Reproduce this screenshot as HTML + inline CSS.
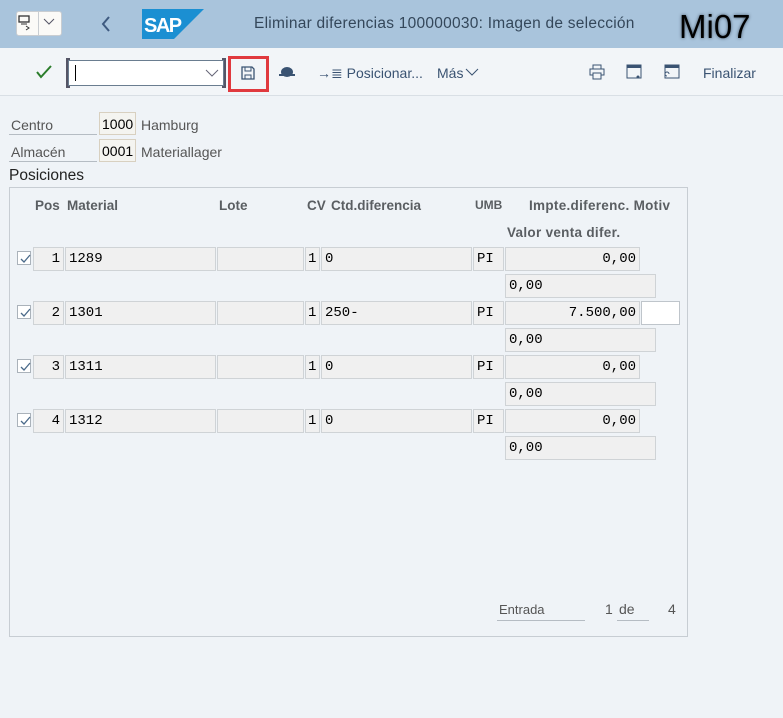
<!DOCTYPE html>
<html><head><meta charset="utf-8"><style>
*{margin:0;padding:0;box-sizing:border-box}
body{width:783px;height:718px;background:#eff3f7;font-family:"Liberation Sans",sans-serif;position:relative;overflow:hidden;color:#32363a}
.a{position:absolute}
.hdr{left:0;top:0;width:783px;height:48px;background:#a9c4dc}
.tb{left:0;top:48px;width:783px;height:48px;background:#f2f5f8;border-bottom:1px solid #d9dfe5}
.t{font-size:14px;white-space:nowrap}
.f{position:absolute;height:24px;background:#f0f0f0;border:1px solid #cfd3d6;font-family:"Liberation Mono",monospace;font-size:14px;line-height:22px;padding:0 3px;color:#000}
.r{text-align:right}
.h{position:absolute;font-size:13.5px;font-weight:bold;color:#5a5e62;top:198px}
.cb{position:absolute;width:14px;height:14px;border:1px solid #aab2ba;background:#fff}
.cb svg{position:absolute;left:1px;top:1px}
</style></head><body>
<div class="a hdr"></div>
<div class="a" style="left:16px;top:11px;width:46px;height:25px;background:#fbfaf7;border:1px solid #c9cdd1;border-radius:3px"></div>
<div class="a" style="left:38px;top:12px;width:1px;height:23px;background:#c9cdd1"></div>
<svg class="a" style="left:17px;top:14px" width="20" height="18"><rect x="2" y="2" width="10" height="6" fill="none" stroke="#333" stroke-width="1.3"/><path d="M4 10h6M9 12l3 2-3 2" stroke="#333" fill="none"/></svg>
<svg class="a" style="left:43px;top:18px" width="12" height="8"><path d="M1 1l5 5 5-5" stroke="#556" fill="none"/></svg>
<svg class="a" style="left:100px;top:15px" width="12" height="18"><path d="M9 2L3 9l6 7" stroke="#3e5a80" stroke-width="2" fill="none"/></svg>
<svg class="a" style="left:142px;top:9px" width="62" height="30"><path d="M0 0h62L32 30H0z" fill="#1b8fd2"/><text x="2" y="23" font-family="Liberation Sans" font-weight="bold" font-size="20" fill="#fff" letter-spacing="-1.5">SAP</text></svg>
<div class="a t" style="left:254px;top:15px;font-size:15.5px;color:#34475a;letter-spacing:0.25px">Eliminar diferencias 100000030: Imagen de selección</div>
<div class="a" style="left:679px;top:8px;font-size:33px;color:#000;text-shadow:0 0 3px #456">Mi07</div>

<div class="a tb"></div>
<svg class="a" style="left:36px;top:65px" width="16" height="14"><path d="M1 7l4 5 10-11" stroke="#2b7d2b" stroke-width="2" fill="none"/></svg>
<div class="a" style="left:68px;top:60px;width:156px;height:26px;background:#fff;border:1px solid #6a7d90"></div>
<div class="a" style="left:66px;top:58px;width:4px;height:30px;border:2px solid #556;border-right:none"></div>
<div class="a" style="left:222px;top:58px;width:4px;height:30px;border:2px solid #556;border-left:none"></div>
<div class="a" style="left:75px;top:65px;width:1px;height:16px;background:#000"></div>
<svg class="a" style="left:205px;top:69px" width="14" height="8"><path d="M1 1l6 6 6-6" stroke="#667" fill="none"/></svg>
<div class="a" style="left:228px;top:56px;width:41px;height:36px;border:3px solid #e0393e"></div>
<svg class="a" style="left:241px;top:66px" width="14" height="14"><path d="M1 1h10l2 2v10H1z" fill="none" stroke="#3a5372" stroke-width="1.3"/><path d="M4 1v4h6V1M4 13V9h6v4" fill="none" stroke="#3a5372"/></svg>
<svg class="a" style="left:278px;top:66px" width="18" height="12"><ellipse cx="9" cy="6" rx="6" ry="5" fill="#3a5372"/><rect x="1" y="8" width="16" height="2" fill="#3a5372"/></svg>
<div class="a t" style="left:317px;top:65px;color:#3a5372">→≣ Posicionar...</div>
<div class="a t" style="left:437px;top:65px;color:#3a5372">Más</div>
<svg class="a" style="left:465px;top:68px" width="14" height="9"><path d="M1 1l6 6 6-6" stroke="#3a5372" fill="none"/></svg>
<svg class="a" style="left:589px;top:64px" width="16" height="16"><rect x="4" y="1" width="8" height="4" fill="none" stroke="#3a5372"/><rect x="1" y="5" width="14" height="6" fill="none" stroke="#3a5372"/><rect x="4" y="9" width="8" height="6" fill="#f2f5f8" stroke="#3a5372"/></svg>
<svg class="a" style="left:626px;top:64px" width="16" height="16"><rect x="1" y="1" width="14" height="13" fill="none" stroke="#3a5372"/><rect x="1" y="1" width="14" height="3" fill="#3a5372"/><circle cx="12" cy="13" r="1.5" fill="#3a5372"/></svg>
<svg class="a" style="left:664px;top:64px" width="16" height="16"><rect x="1" y="1" width="14" height="13" fill="none" stroke="#3a5372"/><rect x="1" y="1" width="14" height="3" fill="#3a5372"/><path d="M3 12a2 2 0 1 1 2-2" stroke="#3a5372" fill="none"/></svg>
<div class="a t" style="left:703px;top:65px;color:#3a5372">Finalizar</div>

<div class="a t" style="left:11px;top:117px;color:#555">Centro</div>
<div class="a" style="left:9px;top:134px;width:88px;height:1px;background:#b5bcc3"></div>
<div class="a t" style="left:99px;top:112px;width:37px;height:23px;border:1px solid #d8d0c0;background:#f4f4f0;padding:3px 2px;color:#000">1000</div>
<div class="a t" style="left:141px;top:117px;color:#555">Hamburg</div>
<div class="a t" style="left:11px;top:144px;color:#555">Almacén</div>
<div class="a" style="left:9px;top:161px;width:88px;height:1px;background:#b5bcc3"></div>
<div class="a t" style="left:99px;top:139px;width:37px;height:23px;border:1px solid #d8d0c0;background:#f4f4f0;padding:3px 2px;color:#000">0001</div>
<div class="a t" style="left:141px;top:144px;color:#555">Materiallager</div>
<div class="a" style="left:9px;top:167px;font-size:15.5px;color:#222">Posiciones</div>

<div class="a" style="left:9px;top:187px;width:679px;height:450px;border:1px solid #c7cdd3"></div>
<div class="h" style="left:35px">Pos</div>
<div class="h" style="left:67px">Material</div>
<div class="h" style="left:219px">Lote</div>
<div class="h" style="left:307px">CV</div>
<div class="h" style="left:331px">Ctd.diferencia</div>
<div class="h" style="left:475px;font-size:12px">UMB</div>
<div class="h" style="left:529px;letter-spacing:0.3px">Impte.diferenc. Motiv</div>
<div class="h" style="left:507px;top:225px;letter-spacing:0.3px">Valor venta difer.</div>

<div class="cb" style="left:17px;top:251px"><svg width="12" height="12"><path d="M2 6l3 3 6-7" stroke="#4a6a8a" stroke-width="1.3" fill="none"/></svg></div>
<div class="f r" style="left:33px;top:247px;width:31px">1</div>
<div class="f" style="left:65px;top:247px;width:151px">1289</div>
<div class="f" style="left:217px;top:247px;width:87px"></div>
<div class="f" style="left:305px;top:247px;width:15px;padding:0 2px">1</div>
<div class="f" style="left:321px;top:247px;width:151px">0</div>
<div class="f" style="left:473px;top:247px;width:31px">PI</div>
<div class="f r" style="left:505px;top:247px;width:135px">0,00</div>
<div class="f" style="left:505px;top:274px;width:151px">0,00</div>

<div class="cb" style="left:17px;top:305px"><svg width="12" height="12"><path d="M2 6l3 3 6-7" stroke="#4a6a8a" stroke-width="1.3" fill="none"/></svg></div>
<div class="f r" style="left:33px;top:301px;width:31px">2</div>
<div class="f" style="left:65px;top:301px;width:151px">1301</div>
<div class="f" style="left:217px;top:301px;width:87px"></div>
<div class="f" style="left:305px;top:301px;width:15px;padding:0 2px">1</div>
<div class="f" style="left:321px;top:301px;width:151px">250-</div>
<div class="f" style="left:473px;top:301px;width:31px">PI</div>
<div class="f r" style="left:505px;top:301px;width:135px">7.500,00</div>
<div class="f" style="left:641px;top:301px;width:39px;background:#fff;border-color:#bfc5cb"></div>
<div class="f" style="left:505px;top:328px;width:151px">0,00</div>

<div class="cb" style="left:17px;top:359px"><svg width="12" height="12"><path d="M2 6l3 3 6-7" stroke="#4a6a8a" stroke-width="1.3" fill="none"/></svg></div>
<div class="f r" style="left:33px;top:355px;width:31px">3</div>
<div class="f" style="left:65px;top:355px;width:151px">1311</div>
<div class="f" style="left:217px;top:355px;width:87px"></div>
<div class="f" style="left:305px;top:355px;width:15px;padding:0 2px">1</div>
<div class="f" style="left:321px;top:355px;width:151px">0</div>
<div class="f" style="left:473px;top:355px;width:31px">PI</div>
<div class="f r" style="left:505px;top:355px;width:135px">0,00</div>
<div class="f" style="left:505px;top:382px;width:151px">0,00</div>

<div class="cb" style="left:17px;top:413px"><svg width="12" height="12"><path d="M2 6l3 3 6-7" stroke="#4a6a8a" stroke-width="1.3" fill="none"/></svg></div>
<div class="f r" style="left:33px;top:409px;width:31px">4</div>
<div class="f" style="left:65px;top:409px;width:151px">1312</div>
<div class="f" style="left:217px;top:409px;width:87px"></div>
<div class="f" style="left:305px;top:409px;width:15px;padding:0 2px">1</div>
<div class="f" style="left:321px;top:409px;width:151px">0</div>
<div class="f" style="left:473px;top:409px;width:31px">PI</div>
<div class="f r" style="left:505px;top:409px;width:135px">0,00</div>
<div class="f" style="left:505px;top:436px;width:151px">0,00</div>

<div class="a t" style="left:499px;top:602px;font-size:13px;color:#555">Entrada</div>
<div class="a" style="left:497px;top:620px;width:88px;height:1px;background:#b5bcc3"></div>
<div class="a t" style="left:605px;top:601px;color:#555">1</div>
<div class="a t" style="left:619px;top:601px;font-size:14px;color:#555">de</div>
<div class="a" style="left:617px;top:620px;width:32px;height:1px;background:#b5bcc3"></div>
<div class="a t" style="left:668px;top:601px;color:#555">4</div>
</body></html>
